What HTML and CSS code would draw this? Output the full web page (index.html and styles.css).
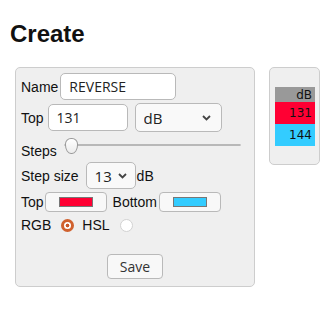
FILE: index.html
```html
<!DOCTYPE html>
<html lang="en">
<head>
    <meta charset="UTF-8">
    <meta name="viewport" content="width=device-width, initial-scale=1.0">
    <title>Create</title>
    <link rel="stylesheet" href="styles.css">
</head>
<body>

    <h2 class="title">Create</h2>

    <div class="panels">

        <!-- editor -->
        <div class="panel editor">
            <div class="row row-name">
                <span class="lbl">Name</span>
                <input class="txt name-input" type="text" value="REVERSE">
            </div>

            <div class="row row-top">
                <span class="lbl">Top</span>
                <input class="txt top-input" type="text" value="131">
                <span class="sel-wrap unit-wrap">
                    <select class="sel unit-sel">
                        <option>dB</option>
                    </select>
                    <svg class="chev" width="9" height="6" viewBox="0 0 9 6"><path d="M1 1 L4.5 4.5 L8 1" fill="none" stroke="#444" stroke-width="1.8"/></svg>
                </span>
            </div>

            <div class="row row-steps">
                <span class="lbl steps-lbl">Steps</span>
                <input class="steps-slider" type="range" min="0" max="100" value="0">
            </div>

            <div class="row row-size">
                <span class="lbl">Step size</span>
                <span class="sel-wrap size-wrap">
                    <select class="sel size-sel">
                        <option>13</option>
                    </select>
                    <svg class="chev" width="9" height="6" viewBox="0 0 9 6"><path d="M1 1 L4.5 4.5 L8 1" fill="none" stroke="#444" stroke-width="1.8"/></svg>
                </span>
                <span class="lbl db-lbl">dB</span>
            </div>

            <div class="row row-colors">
                <span class="lbl">Top</span>
                <button class="color-btn top-btn"><span class="swatch" style="background-color: #ff0033;"></span></button>
                <span class="lbl bottom-lbl">Bottom</span>
                <button class="color-btn bottom-btn"><span class="swatch" style="background-color: #33ccff;"></span></button>
            </div>

            <div class="row row-mode">
                <span class="lbl">RGB</span>
                <span class="radio on"></span>
                <span class="lbl hsl-lbl">HSL</span>
                <span class="radio"></span>
            </div>

            <div class="row row-save">
                <button class="save-btn">Save</button>
            </div>
        </div>

        <!-- preview -->
        <div class="panel preview">
            <table class="scale">
                <tr><td class="scale-head">dB</td></tr>
                <tr><td class="scale-cell" style="background-color: #ff0033;">131</td></tr>
                <tr><td class="scale-cell" style="background-color: #33ccff;">144</td></tr>
            </table>
        </div>

    </div>

</body>
</html>
```

FILE: styles.css
```css
body {
    margin: 0;
    font-family: 'Liberation Sans', Arial, sans-serif;
    font-size: 14px;
    color: #111;
    background: #fff;
}

.title {
    margin: 0;
    padding: 20px 0 0 10px;
    font-size: 24px;
    line-height: 27px;
    font-weight: bold;
}

.panels {
    display: flex;
    align-items: flex-start;
    margin-top: 20px;
    padding-left: 15px;
}

.panel {
    box-sizing: border-box;
    background-color: #efefef;
    border: 1px solid #cdcdcd;
    border-radius: 5px;
}

/* editor panel */
.editor {
    width: 240px;
    padding: 5px 5px 7px 5px;
}

.row {
    display: flex;
    align-items: center;
}

.lbl {
    line-height: 16px;
    white-space: nowrap;
}

.txt {
    box-sizing: border-box;
    height: 27px;
    margin: 0;
    padding: 0 8px;
    border: 1px solid #b9b9b9;
    border-radius: 5px;
    background: #fff;
    font-family: 'Open Sans', sans-serif;
    font-size: 14px;
    color: #222;
    outline: none;
}

.row-name { height: 27px; }
.name-input { width: 116px; margin-left: 2px; }

.row-top { height: 29px; margin-top: 3px; }
.top-input { width: 80px; margin-left: 4px; }

.sel-wrap {
    position: relative;
    display: inline-block;
}

.sel {
    -webkit-appearance: none;
    appearance: none;
    box-sizing: border-box;
    margin: 0;
    padding: 0 8px;
    border: 1px solid #b9b9b9;
    border-radius: 5px;
    background: #f9f9f9;
    font-family: 'Open Sans', sans-serif;
    font-size: 15px;
    color: #222;
    outline: none;
}

.chev {
    position: absolute;
    right: 10px;
    top: 50%;
    margin-top: -3px;
}

.unit-wrap { margin-left: 7px; }
.unit-sel { width: 87px; height: 29px; }
.unit-wrap .chev { right: 11px; }

.row-steps {
    height: 26px;
    align-items: flex-start;
}

.steps-lbl { margin-top: 11px; }

.steps-slider {
    -webkit-appearance: none;
    appearance: none;
    width: 177px;
    height: 16px;
    margin: 5px 0 0 7px;
    padding: 0;
    background: transparent;
}

.steps-slider::-webkit-slider-runnable-track {
    height: 2px;
    background: #dcdcdc;
    border: 1px solid #b8b8b8;
    border-radius: 2px;
}

.steps-slider::-webkit-slider-thumb {
    -webkit-appearance: none;
    box-sizing: border-box;
    width: 13px;
    height: 16px;
    margin-top: -7px;
    border: 1px solid #9a9a9a;
    border-radius: 6px 6px 6px 6px / 6px 6px 9px 9px;
    background: linear-gradient(#ffffff, #ececec);
}

.row-size { height: 27px; margin-top: 4px; }
.size-wrap { margin-left: 7px; }
.size-sel { width: 50px; height: 27px; }
.size-wrap .chev { right: 9px; }
.db-lbl { margin-left: 1px; }

.row-colors { height: 20px; margin-top: 3px; }

.color-btn {
    box-sizing: border-box;
    display: flex;
    align-items: center;
    justify-content: center;
    width: 62px;
    height: 20px;
    margin: 0;
    padding: 0;
    border: 1px solid #b9b9b9;
    border-radius: 4px;
    background: #f8f8f8;
}

.top-btn { margin-left: 1px; }
.bottom-lbl { margin-left: 6px; }
.bottom-btn { margin-left: 2px; }

.swatch {
    box-sizing: border-box;
    display: block;
    width: 34px;
    height: 10px;
    border: 1px solid #777;
}

.row-mode { height: 18px; margin-top: 4px; }

/* radio buttons drawn by hand, to get the orange theme look */
.radio {
    box-sizing: border-box;
    display: inline-block;
    width: 13px;
    height: 13px;
    margin: 0 8px 0 10px;
    border: 1px solid #d2d2d2;
    border-radius: 50%;
    background: #fff;
}

.radio.on {
    border: 3px solid #d0612e;
    background: radial-gradient(circle, #c9582a 0, #c9582a 1.6px, #fff 2.2px);
}

.row-save {
    justify-content: center;
    margin-top: 20px;
}

.save-btn {
    box-sizing: border-box;
    width: 56px;
    height: 25px;
    margin: 0;
    padding: 0;
    border: 1px solid #b9b9b9;
    border-radius: 4px;
    background: #f8f8f8;
    font-family: 'Open Sans', sans-serif;
    font-size: 14px;
    color: #333;
}

/* preview panel */
.preview {
    width: 51px;
    height: 98px;
    margin-left: 14px;
    padding: 19px 4px 0 5px;
}

.scale {
    border-collapse: collapse;
    width: 40px;
    font-family: 'DejaVu Sans', sans-serif;
    font-size: 12px;
    color: #111;
}

.scale td {
    padding: 0 3px 0 0;
    text-align: right;
}

.scale-head {
    height: 15px;
    background-color: #999;
}

.scale-cell {
    height: 22px;
}
```
